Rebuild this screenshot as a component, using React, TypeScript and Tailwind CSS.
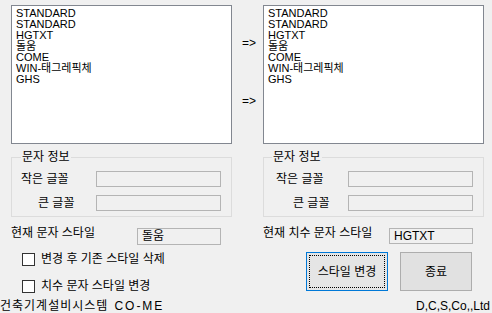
const fonts = [
    { name: 'STANDARD' },
    { name: 'STANDARD' },
    { name: 'HGTXT' },
    { name: '돌움' },
    { name: 'COME' },
    { name: 'WIN-태그레픽체' },
    { name: 'GHS' },
]

function FontList() {
    return (
        <div className="h-[139px] w-[221px] border border-[#828790] bg-white pl-[4px] pt-[2px]">
            {fonts.map((f, i) => (
                <div key={i} className="text-[11px] leading-[11px] h-[11px] whitespace-nowrap">
                    {f.name}
                </div>
            ))}
        </div>
    )
}

function ReadonlyBox({ value, className }: { value?: string; className: string }) {
    return (
        <div className={`border border-[#b4b4b4] bg-[#f0f0f0] pl-[4px] text-[12px] leading-[14px] ${className}`}>
            {value}
        </div>
    )
}

function FontInfoGroup({ titleLeft, smallLeft, bigLeft }: { titleLeft: string; smallLeft: string; bigLeft: string }) {
    return (
        <div className="relative mt-[13px] h-[60px] w-[221px] border border-[#dcdcdc]">
            {/* group caption sits over the top border */}
            <span className={`absolute top-[-8px] ${titleLeft} bg-[#f0f0f0] px-[1px] text-[12px] leading-[14px]`}>
                문자 정보
            </span>
            <div className="mt-[13px] flex items-center">
                <span className={`${smallLeft} text-[12px] leading-[14px] whitespace-nowrap`}>작은 글꼴</span>
                <ReadonlyBox className="ml-auto mr-[10px] h-[16px] w-[125px]" />
            </div>
            <div className="mt-[8px] flex items-center">
                <span className={`${bigLeft} text-[12px] leading-[14px] whitespace-nowrap`}>큰 글꼴</span>
                <ReadonlyBox className="ml-auto mr-[10px] h-[16px] w-[125px]" />
            </div>
        </div>
    )
}

function CheckRow({ label, className }: { label: string; className: string }) {
    return (
        <div className={`flex items-center pl-[11px] ${className}`}>
            <span className="h-[13px] w-[13px] border border-[#333333] bg-white" />
            <span className="ml-[6px] text-[12px] leading-[14px] whitespace-nowrap">{label}</span>
        </div>
    )
}

export default function App() {
    return (
        <div className="flex h-[313px] w-[492px] flex-col bg-[#f0f0f0] text-black font-['Liberation_Sans','Noto_Sans_CJK_KR',sans-serif]">
            <div className="flex pl-[11px]">
                {/* Left column */}
                <div className="flex w-[221px] flex-col pt-[5px]">
                    <FontList />
                    <FontInfoGroup titleLeft="left-[9px]" smallLeft="ml-[9px]" bigLeft="ml-[26px]" />
                    <div className="mt-[11px] flex items-start">
                        <span className="mt-[-2px] text-[12px] leading-[14px] whitespace-nowrap">현재 문자 스타일</span>
                        <ReadonlyBox value="돌움" className="ml-auto mr-[11px] h-[17px] w-[84px]" />
                    </div>
                    <CheckRow label="변경 후 기존 스타일 삭제" className="mt-[7px]" />
                    <CheckRow label="치수 문자 스타일 변경" className="mt-[13px]" />
                </div>

                {/* Arrows */}
                <div className="flex w-[31px] flex-col pl-[10px] text-[12px] leading-[14px]">
                    <span className="mt-[36px]">=&gt;</span>
                    <span className="mt-[44px]">=&gt;</span>
                </div>

                {/* Right column */}
                <div className="flex w-[221px] flex-col pt-[5px]">
                    <FontList />
                    <FontInfoGroup titleLeft="left-[8px]" smallLeft="ml-[12px]" bigLeft="ml-[29px]" />
                    <div className="mt-[11px] flex items-start">
                        <span className="mt-[-2px] text-[12px] leading-[14px] whitespace-nowrap">현재 치수 문자 스타일</span>
                        <ReadonlyBox value="HGTXT" className="ml-auto mr-[11px] h-[16px] w-[84px]" />
                    </div>
                    <div className="mt-[8px] flex pl-[43px]">
                        <button className="relative h-[39px] w-[82px] border border-[#0078d7] bg-[#e5e5e5] text-[12px]">
                            <span className="absolute inset-[2px] border border-dotted border-black" />
                            스타일 변경
                        </button>
                        <button className="ml-[12px] h-[39px] w-[72px] border border-[#adadad] bg-[#e1e1e1] text-[12px]">
                            종료
                        </button>
                    </div>
                </div>
            </div>

            <div className="mt-auto flex justify-between pr-[2px] text-[12px] leading-[13px]">
                <span>
                    <span className="tracking-[1px]">건축기계설비시스템</span>
                    <span className="ml-[6px] tracking-[2px]">CO-ME</span>
                </span>
                <span>D,C,S,Co,,Ltd</span>
            </div>
        </div>
    )
}
